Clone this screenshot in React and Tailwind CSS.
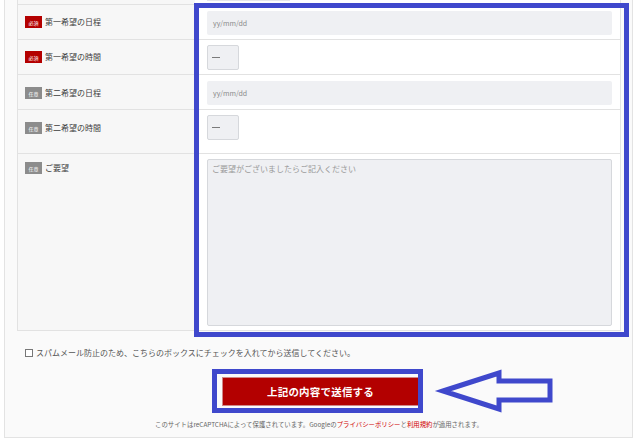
import React from "react";

const font = { fontFamily: '"Noto Sans CJK JP", "Noto Sans", sans-serif' };

function Badge({ req }) {
  return (
    <span
      className={`flex h-[12px] w-[17px] shrink-0 items-center justify-center text-[5px] leading-none text-white ${
        req ? "bg-[#b40000]" : "bg-[#8c8c8c]"
      }`}
    >
      {req ? "必須" : "任意"}
    </span>
  );
}

function Row({ label, req, h, lpt, rpt, children, last }) {
  return (
    <div
      className={`flex ${last ? "" : "border-b border-[#e2e2e2]"}`}
      style={{ height: h }}
    >
      <div
        className="flex w-[177px] shrink-0 items-start gap-[3px] bg-[#f7f7f7] pl-[7px]"
        style={{ paddingTop: lpt }}
      >
        <Badge req={req} />
        <span className="text-[8px] leading-[12px] text-[#3c3c3c]">{label}</span>
      </div>
      <div className="flex-1 bg-white pl-[12px] pr-[8px]" style={{ paddingTop: rpt }}>
        {children}
      </div>
    </div>
  );
}

function DateInput() {
  return (
    <div className="flex h-[24px] w-full items-center rounded-[2px] bg-[#eff0f3] pl-[6px] text-[7px] text-[#8a8a8a]">
      yy/mm/dd
    </div>
  );
}

function TimeSelect() {
  return (
    <div className="flex h-[25px] w-[32px] items-center rounded-[2px] border border-[#d6d8dc] bg-[#eff0f3] pl-[4px]">
      <span className="h-[1px] w-[8px] bg-[#7a7a7a]" />
    </div>
  );
}

export default function App() {
  return (
    <div className="relative h-[446px] w-[640px] overflow-hidden bg-white" style={font}>
      <div className="ml-[4px] w-[629px] border-x border-b border-[#e3e3e3] bg-[#fafafa] pl-[12px] pr-[11px]">
        <div className="border-x border-b border-[#e2e2e2]">
          {/* previous row (partially scrolled off) */}
          <div className="flex h-[5px] border-b border-[#e2e2e2]">
            <div className="w-[177px] shrink-0 bg-[#f7f7f7]" />
            <div className="flex-1 bg-white pl-[12px]">
              <div className="h-[1px] w-[83px] bg-[#e6e7ea]" />
            </div>
          </div>
          <Row label="第一希望の日程" req h={35} lpt={11} rpt={6}>
            <DateInput />
          </Row>
          <Row label="第一希望の時間" req h={35} lpt={11} rpt={5}>
            <TimeSelect />
          </Row>
          <Row label="第二希望の日程" h={35} lpt={12} rpt={6}>
            <DateInput />
          </Row>
          <Row label="第二希望の時間" h={44} lpt={12} rpt={5}>
            <TimeSelect />
          </Row>
          <Row label="ご要望" h={176} lpt={8} rpt={5} last>
            <div className="h-[167px] w-full rounded-[2px] border border-[#d6d8dc] bg-[#eff0f3] pl-[4px] pt-[3px] text-[8px] leading-[12px] text-[#999]">
              ご要望がございましたらご記入ください
            </div>
          </Row>
        </div>

        <div className="mt-[16px] flex items-center gap-[3px] pl-[8px] text-[8px] leading-[12px] text-[#555]">
          <span className="h-[8px] w-[8px] border border-[#777] bg-white" />
          <span>スパムメール防止のため、こちらのボックスにチェックを入れてから送信してください。</span>
        </div>

        <div className="mt-[18px] flex justify-center pl-[3px]">
          <div className="flex h-[29px] w-[197px] items-center justify-center border border-[#d08888] bg-[#b30000] text-[10.5px] font-bold tracking-[0.2px] text-white">
            上記の内容で送信する
          </div>
        </div>

        <div className="mt-[14px] pb-[8px] text-center text-[6.4px] leading-[9px] text-[#666]">
          このサイトはreCAPTCHAによって保護されています。Googleの
          <span className="text-[#d00000]">プライバシーポリシー</span>と
          <span className="text-[#d00000]">利用規約</span>が適用されます。
        </div>
      </div>

      {/* annotation overlays */}
      <div className="absolute left-[194px] top-[3px] h-[334px] w-[435px] border-[5px] border-[#3f48cc]" />
      <div className="absolute left-[212px] top-[369px] h-[44px] w-[211px] border-[5px] border-[#3f48cc]" />
      <svg className="absolute left-0 top-0" width="640" height="446" viewBox="0 0 640 446">
        <polygon
          points="443,391 499,373 499,381 550,381 550,400 499,400 499,409"
          fill="none"
          stroke="#3f48cc"
          strokeWidth="5"
          strokeLinejoin="miter"
        />
      </svg>
    </div>
  );
}
